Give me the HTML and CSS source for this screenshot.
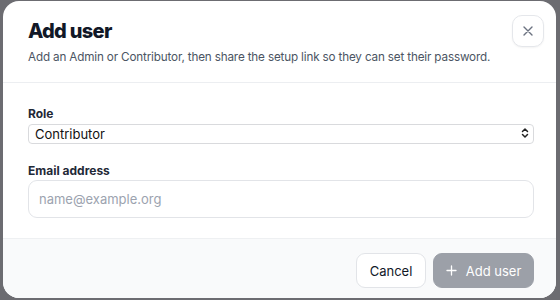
FILE: index.html
```html
<!DOCTYPE html>
<html lang="en">
<head>
<meta charset="utf-8">
<title>Add user</title>
<link rel="stylesheet" href="styles.css">
</head>
<body>
<div class="backdrop">
  <div class="dialog" role="dialog" aria-labelledby="dlg-title">
    <header class="dialog-header">
      <div class="header-text">
        <h1 id="dlg-title" class="title">Add user</h1>
        <p class="subtitle">Add an Admin or Contributor, then share the setup link so they can set their password.</p>
      </div>
      <button class="close-btn" type="button" aria-label="Close">
        <svg width="12" height="12" viewBox="0 0 12 12" fill="none" stroke="#6b7280" stroke-width="1.4" stroke-linecap="round"><path d="M2 2l8 8M10 2l-8 8"/></svg>
      </button>
    </header>
    <div class="dialog-body">
      <div class="field">
        <label class="label" for="role">Role</label>
        <div class="select-wrap">
          <select id="role" class="select">
            <option>Contributor</option>
            <option>Admin</option>
          </select>
          <svg class="chevrons" width="8" height="12" viewBox="0 0 8 12" fill="none" stroke="#222" stroke-width="1.5" stroke-linecap="round" stroke-linejoin="round"><path d="M1.5 4.5L4 2l2.5 2.5M1.5 7.5L4 10l2.5-2.5"/></svg>
        </div>
      </div>
      <div class="field field-email">
        <label class="label" for="email">Email address</label>
        <input id="email" class="input" type="email" placeholder="name@example.org">
      </div>
    </div>
    <footer class="dialog-footer">
      <button class="btn btn-secondary" type="button">Cancel</button>
      <button class="btn btn-primary" type="button" disabled>
        <svg class="plus" width="11" height="11" viewBox="0 0 11 11" fill="none" stroke="#fff" stroke-width="1.3" stroke-linecap="round"><path d="M5.5 1v9M1 5.5h9"/></svg>Add user
      </button>
    </footer>
  </div>
</div>
</body>
</html>
```
FILE: styles.css
```css
* { box-sizing: border-box; }
html, body { margin: 0; padding: 0; }
body {
  background: #6c6c71;
  font-family: Inter, "Noto Sans", sans-serif;
  color: #111827;
  width: 560px;
  height: 300px;
  overflow: hidden;
}
.backdrop {
  padding: 1px 4px 0 3px;
  height: 300px;
}
.dialog {
  background: #fff;
  border-radius: 16px;
  height: 297px;
  display: flex;
  flex-direction: column;
  overflow: hidden;
}
.dialog-header {
  display: flex;
  justify-content: space-between;
  align-items: flex-start;
  padding: 14px 12px 0 25px;
  height: 82px;
  border-bottom: 1px solid #eceef1;
}
.header-text { flex: 1; min-width: 0; }
.title {
  margin: 0;
  font-size: 20px;
  font-weight: 800;
  letter-spacing: -0.7px;
  line-height: 30px;
  margin-top: 1px;
}
.subtitle {
  margin: 2px 0 0;
  font-size: 11.7px;
  letter-spacing: -0.16px;
  white-space: nowrap;
  color: #4b5563;
  line-height: 18px;
}
.close-btn {
  width: 32px;
  height: 32px;
  flex: none;
  border: 1px solid #e5e7eb;
  border-radius: 10px;
  background: #fff;
  display: flex;
  align-items: center;
  justify-content: center;
  padding: 0;
  box-shadow: 0 1px 2px rgba(0,0,0,0.05);
}
.dialog-body {
  padding: 24px 22px 0 25px;
  height: 155px;
}
.field { display: flex; flex-direction: column; }
.field-email { margin-top: 20px; }
.label {
  font-size: 12px;
  font-weight: 700;
  color: #1f2937;
  line-height: 14px;
  margin-bottom: 2px;
}
.select-wrap { position: relative; }
.select {
  appearance: none;
  -webkit-appearance: none;
  width: 100%;
  height: 20px;
  border: 1px solid #d9dadd;
  border-radius: 4px;
  background: #fff;
  font-family: inherit;
  font-size: 13px;
  color: #111;
  padding: 0 0 0 6px;
  line-height: 18px;
}
.chevrons {
  position: absolute;
  right: 5px;
  top: 4px;
  pointer-events: none;
}
.input {
  height: 38px;
  border: 1px solid #e2e4e8;
  border-radius: 9px;
  font-family: inherit;
  font-size: 13px;
  padding: 0 10px;
  color: #111827;
  background: #fff;
}
.input::placeholder { color: #9ca3af; }
.dialog-footer {
  flex: 1;
  background: #f9fafb;
  border-top: 1px solid #eef0f2;
  display: flex;
  justify-content: flex-end;
  align-items: flex-start;
  gap: 7px;
  padding: 14px 22px 0 0;
}
.btn {
  height: 35px;
  border-radius: 9px;
  font-family: inherit;
  font-size: 13px;
  padding: 0;
  white-space: nowrap;
  display: inline-flex;
  align-items: center;
}
.btn-secondary {
  background: #fff;
  border: 1px solid #e2e4e8;
  color: #111827;
  width: 70px;
  justify-content: center;
}
.btn-primary {
  background: #9ca0a8;
  border: 1px solid #9ca0a8;
  color: #fff;
  width: 101px;
  justify-content: center;
}
.plus {
  margin-right: 9px;
  flex: none;
}
```
